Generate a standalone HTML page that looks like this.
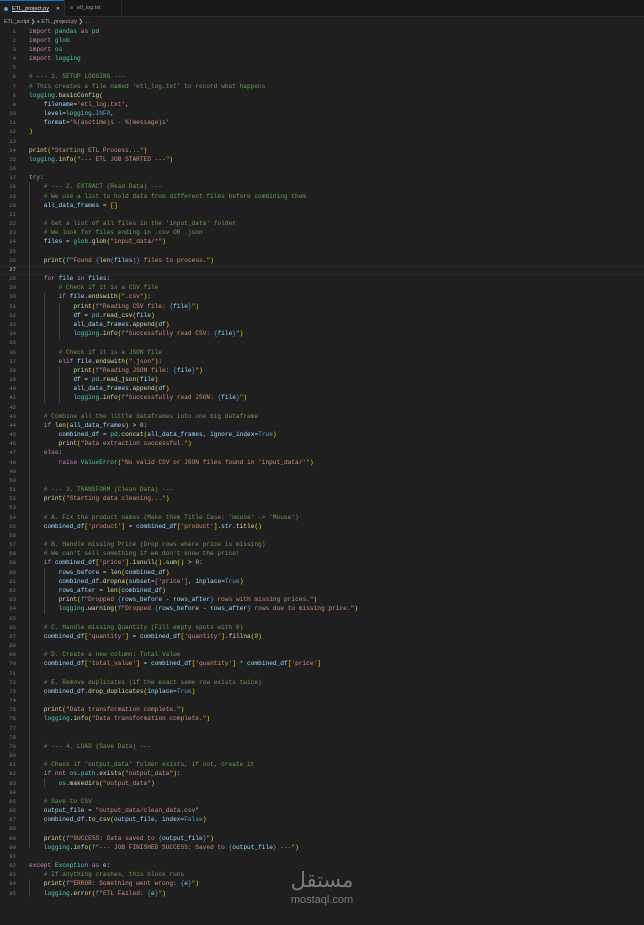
<!DOCTYPE html>
<html><head><meta charset="utf-8"><style>
*{margin:0;padding:0;box-sizing:border-box}
body{width:644px;height:925px;background:#1f1f1f;overflow:hidden;font-family:"Liberation Mono",monospace;position:relative}
.tabs{position:absolute;top:0;left:0;width:644px;height:17px;background:#181818;border-bottom:1px solid #2b2b2b}
.tab{position:absolute;top:0;height:17px;font:5.5px "Liberation Sans",sans-serif;color:#9d9d9d;line-height:17px;padding-left:12px}
.t1{left:0;width:64px;background:#1f1f1f;color:#e0e0e0;border-top:1px solid #0078d4;text-decoration:underline}
.t2{left:64px;width:58px;border-right:1px solid #2b2b2b;border-left:1px solid #2b2b2b}
.t1:before{content:"";position:absolute;left:4px;top:6px;width:4px;height:4px;border-radius:50%;background:#5b9bd5}
.t1:after{content:"✕";position:absolute;right:4px;top:0;color:#ccc;font-size:5px}
.t2:before{content:"≡";position:absolute;left:5px;color:#aaa}
.bc{position:absolute;top:17px;left:4px;font:5.3px "Liberation Sans",sans-serif;color:#a9a9a9;line-height:10px}
.ln{position:absolute;left:0;top:26.5px;width:16px;text-align:right;color:#6e7681;font-size:5.6px;line-height:9.17px;white-space:pre}
pre{position:absolute;left:29px;top:26.5px;font-family:"Liberation Mono",monospace;font-size:6.17px;line-height:9.17px;color:#cccccc;white-space:pre}
.cur{position:absolute;left:0;top:265.5px;width:644px;height:9.17px;border-top:1px solid #282828;border-bottom:1px solid #282828}
.k{color:#c586c0}.m{color:#4ec9b0}.s{color:#ce9178}.c{color:#6a9955}.f{color:#dcdcaa}.v{color:#9cdcfe}.n{color:#b5cea8}.b{color:#569cd6}.y{color:#ffd700}.p{color:#da70d6}
.g{position:absolute;width:1px;background:#404040}
.wm{position:absolute;left:282px;top:864px;width:80px;text-align:center;color:#8a8a8a;opacity:.85;font-family:"Liberation Sans",sans-serif}
</style></head><body>
<div class="tabs"><div class="tab t1">ETL_project.py</div><div class="tab t2">etl_log.txt</div></div>
<div class="bc">ETL_script ❯ <span style="color:#5b9bd5">●</span> ETL_project.py ❯ ...</div>
<div class="cur"></div>
<div class="g" style="left:29px;top:183px;height:665px"></div>
<div class="g" style="left:29px;top:879px;height:18px"></div>
<div class="g" style="left:44px;top:293px;height:110px"></div>
<div class="g" style="left:59px;top:303px;height:37px"></div>
<div class="g" style="left:59px;top:366px;height:37px"></div>
<div class="g" style="left:44px;top:568px;height:46px"></div>
<div class="g" style="left:44px;top:778px;height:9px"></div>
<div class="ln">1
2
3
4
5
6
7
8
9
10
11
12
13
14
15
16
17
18
19
20
21
22
23
24
25
26
<span style="color:#ccc">27</span>
28
29
30
31
32
33
34
35
36
37
38
39
40
41
42
43
44
45
46
47
48
49
50
51
52
53
54
55
56
57
58
59
60
61
62
63
64
65
66
67
68
69
70
71
72
73
74
75
76
77
78
79
80
81
82
83
84
85
86
87
88
89
90
91
92
93
94
95</div>
<pre><span class="k">import</span> <span class="m">pandas</span> <span class="k">as</span> <span class="m">pd</span>
<span class="k">import</span> <span class="m">glob</span>
<span class="k">import</span> <span class="m">os</span>
<span class="k">import</span> <span class="m">logging</span>

<span class="c"># --- 1. SETUP LOGGING ---</span>
<span class="c"># This creates a file named 'etl_log.txt' to record what happens</span>
<span class="m">logging</span>.<span class="f">basicConfig</span><span class="y">(</span>
    <span class="v">filename</span>=<span class="s">'etl_log.txt'</span>,
    <span class="v">level</span>=<span class="m">logging</span>.<span class="b">INFO</span>,
    <span class="v">format</span>=<span class="s">'%(asctime)s - %(message)s'</span>
<span class="y">)</span>

<span class="f">print</span><span class="y">(</span><span class="s">"Starting ETL Process..."</span><span class="y">)</span>
<span class="m">logging</span>.<span class="f">info</span><span class="y">(</span><span class="s">"--- ETL JOB STARTED ---"</span><span class="y">)</span>

<span class="k">try</span>:
    <span class="c"># --- 2. EXTRACT (Read Data) ---</span>
    <span class="c"># We use a list to hold data from different files before combining them</span>
    <span class="v">all_data_frames</span> = <span class="y">[]</span>

    <span class="c"># Get a list of all files in the 'input_data' folder</span>
    <span class="c"># We look for files ending in .csv OR .json</span>
    <span class="v">files</span> = <span class="m">glob</span>.<span class="f">glob</span><span class="y">(</span><span class="s">"input_data/*"</span><span class="y">)</span>

    <span class="f">print</span><span class="y">(</span><span class="b">f</span><span class="s">"Found </span><span class="b">{</span><span class="f">len</span><span class="p">(</span><span class="v">files</span><span class="p">)</span><span class="b">}</span><span class="s"> files to process."</span><span class="y">)</span>

    <span class="k">for</span> <span class="v">file</span> <span class="k">in</span> <span class="v">files</span>:
        <span class="c"># Check if it is a CSV file</span>
        <span class="k">if</span> <span class="v">file</span>.<span class="f">endswith</span><span class="y">(</span><span class="s">".csv"</span><span class="y">)</span>:
            <span class="f">print</span><span class="y">(</span><span class="b">f</span><span class="s">"Reading CSV file: </span><span class="b">{</span><span class="v">file</span><span class="b">}</span><span class="s">"</span><span class="y">)</span>
            <span class="v">df</span> = <span class="m">pd</span>.<span class="f">read_csv</span><span class="y">(</span><span class="v">file</span><span class="y">)</span>
            <span class="v">all_data_frames</span>.<span class="f">append</span><span class="y">(</span><span class="v">df</span><span class="y">)</span>
            <span class="m">logging</span>.<span class="f">info</span><span class="y">(</span><span class="b">f</span><span class="s">"Successfully read CSV: </span><span class="b">{</span><span class="v">file</span><span class="b">}</span><span class="s">"</span><span class="y">)</span>

        <span class="c"># Check if it is a JSON file</span>
        <span class="k">elif</span> <span class="v">file</span>.<span class="f">endswith</span><span class="y">(</span><span class="s">".json"</span><span class="y">)</span>:
            <span class="f">print</span><span class="y">(</span><span class="b">f</span><span class="s">"Reading JSON file: </span><span class="b">{</span><span class="v">file</span><span class="b">}</span><span class="s">"</span><span class="y">)</span>
            <span class="v">df</span> = <span class="m">pd</span>.<span class="f">read_json</span><span class="y">(</span><span class="v">file</span><span class="y">)</span>
            <span class="v">all_data_frames</span>.<span class="f">append</span><span class="y">(</span><span class="v">df</span><span class="y">)</span>
            <span class="m">logging</span>.<span class="f">info</span><span class="y">(</span><span class="b">f</span><span class="s">"Successfully read JSON: </span><span class="b">{</span><span class="v">file</span><span class="b">}</span><span class="s">"</span><span class="y">)</span>

    <span class="c"># Combine all the little dataframes into one big dataframe</span>
    <span class="k">if</span> <span class="f">len</span><span class="y">(</span><span class="v">all_data_frames</span><span class="y">)</span> &gt; <span class="n">0</span>:
        <span class="v">combined_df</span> = <span class="m">pd</span>.<span class="f">concat</span><span class="y">(</span><span class="v">all_data_frames</span>, <span class="v">ignore_index</span>=<span class="b">True</span><span class="y">)</span>
        <span class="f">print</span><span class="y">(</span><span class="s">"Data extraction successful."</span><span class="y">)</span>
    <span class="k">else</span>:
        <span class="k">raise</span> <span class="m">ValueError</span><span class="y">(</span><span class="s">"No valid CSV or JSON files found in 'input_data/'"</span><span class="y">)</span>


    <span class="c"># --- 3. TRANSFORM (Clean Data) ---</span>
    <span class="f">print</span><span class="y">(</span><span class="s">"Starting data cleaning..."</span><span class="y">)</span>

    <span class="c"># A. Fix the product names (Make them Title Case: 'mouse' -&gt; 'Mouse')</span>
    <span class="v">combined_df</span><span class="y">[</span><span class="s">'product'</span><span class="y">]</span> = <span class="v">combined_df</span><span class="y">[</span><span class="s">'product'</span><span class="y">]</span>.<span class="v">str</span>.<span class="f">title</span><span class="y">()</span>

    <span class="c"># B. Handle missing Price (Drop rows where price is missing)</span>
    <span class="c"># We can't sell something if we don't know the price!</span>
    <span class="k">if</span> <span class="v">combined_df</span><span class="y">[</span><span class="s">'price'</span><span class="y">]</span>.<span class="f">isnull</span><span class="y">()</span>.<span class="f">sum</span><span class="y">()</span> &gt; <span class="n">0</span>:
        <span class="v">rows_before</span> = <span class="f">len</span><span class="y">(</span><span class="v">combined_df</span><span class="y">)</span>
        <span class="v">combined_df</span>.<span class="f">dropna</span><span class="y">(</span><span class="v">subset</span>=<span class="p">[</span><span class="s">'price'</span><span class="p">]</span>, <span class="v">inplace</span>=<span class="b">True</span><span class="y">)</span>
        <span class="v">rows_after</span> = <span class="f">len</span><span class="y">(</span><span class="v">combined_df</span><span class="y">)</span>
        <span class="f">print</span><span class="y">(</span><span class="b">f</span><span class="s">"Dropped </span><span class="b">{</span><span class="v">rows_before</span> - <span class="v">rows_after</span><span class="b">}</span><span class="s"> rows with missing prices."</span><span class="y">)</span>
        <span class="m">logging</span>.<span class="f">warning</span><span class="y">(</span><span class="b">f</span><span class="s">"Dropped </span><span class="b">{</span><span class="v">rows_before</span> - <span class="v">rows_after</span><span class="b">}</span><span class="s"> rows due to missing price."</span><span class="y">)</span>

    <span class="c"># C. Handle missing Quantity (Fill empty spots with 0)</span>
    <span class="v">combined_df</span><span class="y">[</span><span class="s">'quantity'</span><span class="y">]</span> = <span class="v">combined_df</span><span class="y">[</span><span class="s">'quantity'</span><span class="y">]</span>.<span class="f">fillna</span><span class="y">(</span><span class="n">0</span><span class="y">)</span>

    <span class="c"># D. Create a new column: Total Value</span>
    <span class="v">combined_df</span><span class="y">[</span><span class="s">'total_value'</span><span class="y">]</span> = <span class="v">combined_df</span><span class="y">[</span><span class="s">'quantity'</span><span class="y">]</span> * <span class="v">combined_df</span><span class="y">[</span><span class="s">'price'</span><span class="y">]</span>

    <span class="c"># E. Remove duplicates (if the exact same row exists twice)</span>
    <span class="v">combined_df</span>.<span class="f">drop_duplicates</span><span class="y">(</span><span class="v">inplace</span>=<span class="b">True</span><span class="y">)</span>

    <span class="f">print</span><span class="y">(</span><span class="s">"Data transformation complete."</span><span class="y">)</span>
    <span class="m">logging</span>.<span class="f">info</span><span class="y">(</span><span class="s">"Data transformation complete."</span><span class="y">)</span>


    <span class="c"># --- 4. LOAD (Save Data) ---</span>

    <span class="c"># Check if 'output_data' folder exists, if not, create it</span>
    <span class="k">if not</span> <span class="m">os</span>.<span class="m">path</span>.<span class="f">exists</span><span class="y">(</span><span class="s">"output_data"</span><span class="y">)</span>:
        <span class="m">os</span>.<span class="f">makedirs</span><span class="y">(</span><span class="s">"output_data"</span><span class="y">)</span>

    <span class="c"># Save to CSV</span>
    <span class="v">output_file</span> = <span class="s">"output_data/clean_data.csv"</span>
    <span class="v">combined_df</span>.<span class="f">to_csv</span><span class="y">(</span><span class="v">output_file</span>, <span class="v">index</span>=<span class="b">False</span><span class="y">)</span>

    <span class="f">print</span><span class="y">(</span><span class="b">f</span><span class="s">"SUCCESS: Data saved to </span><span class="b">{</span><span class="v">output_file</span><span class="b">}</span><span class="s">"</span><span class="y">)</span>
    <span class="m">logging</span>.<span class="f">info</span><span class="y">(</span><span class="b">f</span><span class="s">"--- JOB FINISHED SUCCESS: Saved to </span><span class="b">{</span><span class="v">output_file</span><span class="b">}</span><span class="s"> ---"</span><span class="y">)</span>

<span class="k">except</span> <span class="m">Exception</span> <span class="k">as</span> <span class="v">e</span>:
    <span class="c"># If anything crashes, this block runs</span>
    <span class="f">print</span><span class="y">(</span><span class="b">f</span><span class="s">"ERROR: Something went wrong: </span><span class="b">{</span><span class="v">e</span><span class="b">}</span><span class="s">"</span><span class="y">)</span>
    <span class="m">logging</span>.<span class="f">error</span><span class="y">(</span><span class="b">f</span><span class="s">"ETL Failed: </span><span class="b">{</span><span class="v">e</span><span class="b">}</span><span class="s">"</span><span class="y">)</span></pre>
<div class="wm"><div style="font:21px 'Noto Sans CJK SC','DejaVu Sans',sans-serif;line-height:30px">مستقل</div><div style="font-size:11px;line-height:12px">mostaql.com</div></div>
</body></html>
